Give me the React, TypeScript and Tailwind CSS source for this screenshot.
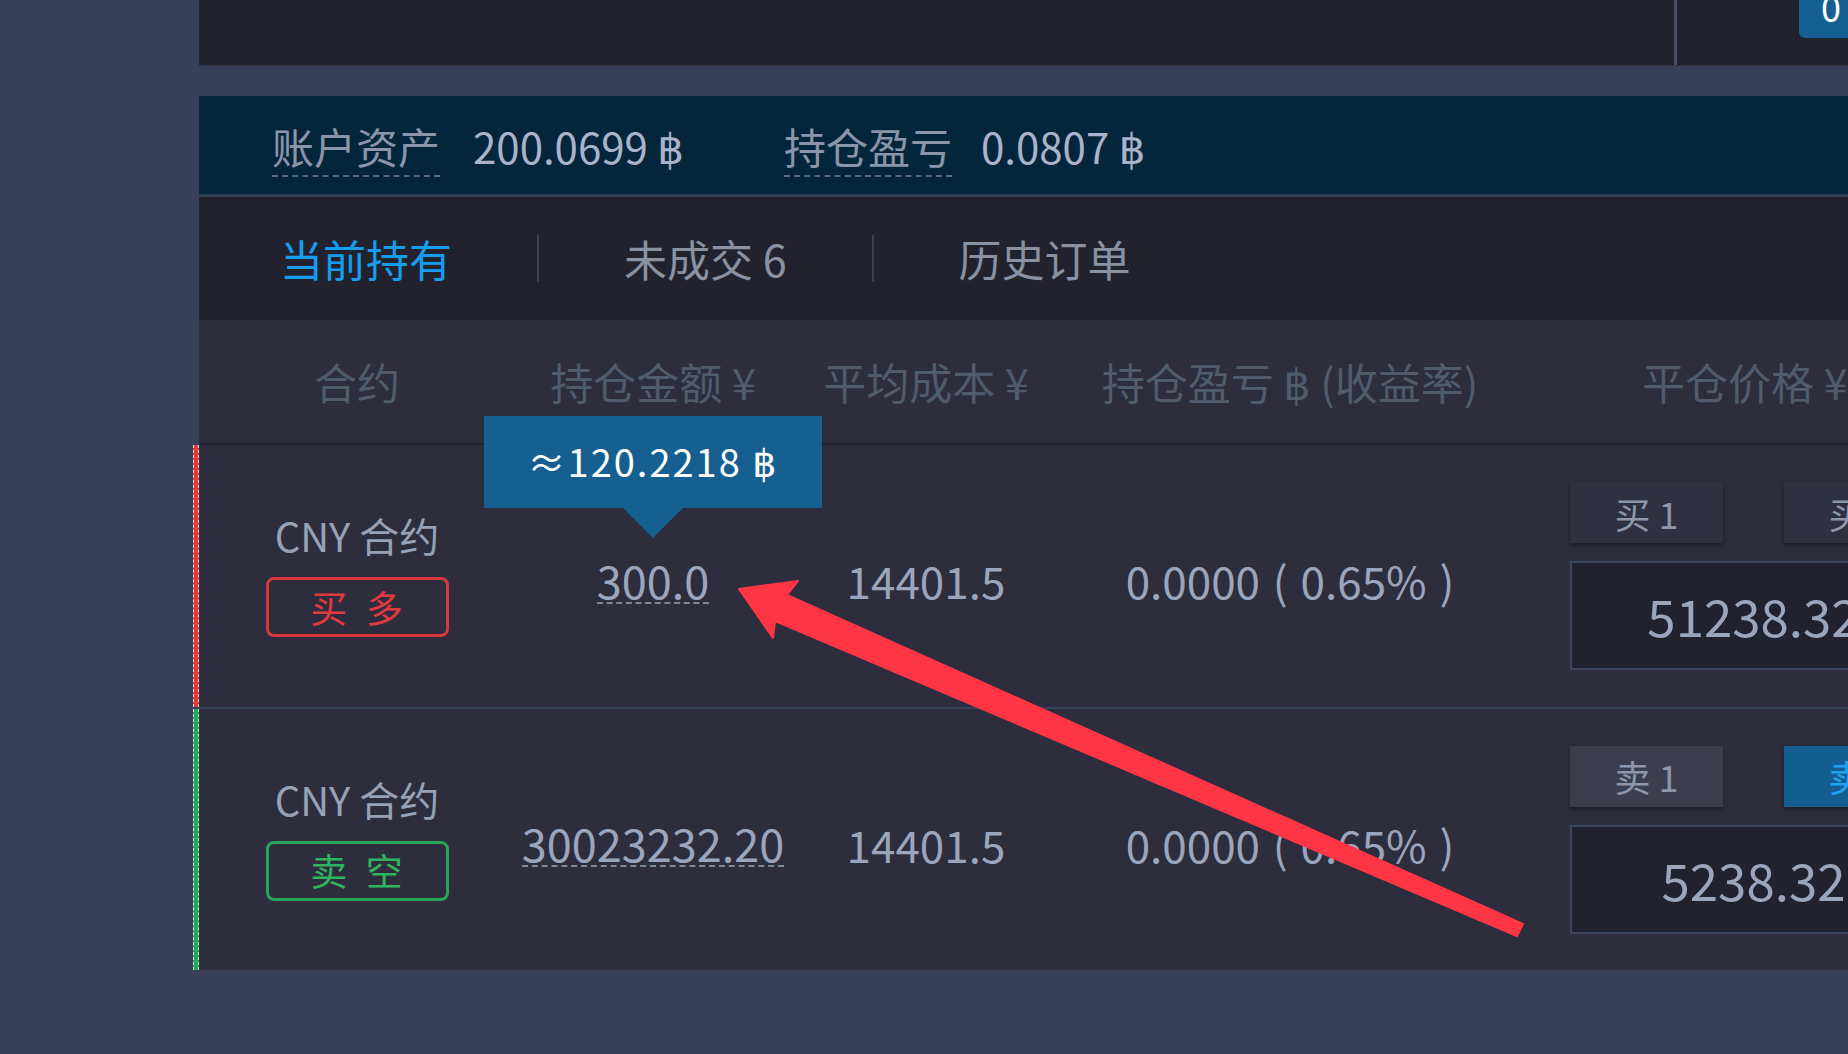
import React from 'react';

const cjk = { fontFamily: '"Noto Sans CJK SC", "Noto Sans", "DejaVu Sans", sans-serif' };

interface Position {
  side: 'long' | 'short';
  amount: string;
  cost: string;
  pnl: string;
  quick: string;
  price: string;
}

const positions: Position[] = [
  { side: 'long', amount: '300.0', cost: '14401.5', pnl: '0.0000 ( 0.65% )', quick: '买 1', price: '51238.32' },
  { side: 'short', amount: '30023232.20', cost: '14401.5', pnl: '0.0000 ( 0.65% )', quick: '卖 1', price: '5238.32' },
];

const cols = 'grid grid-cols-[316px_276px_270px_458px_418px]';

const Row: React.FC<{ p: Position; last?: boolean }> = ({ p, last }) => {
  const isLong = p.side === 'long';
  return (
    <div
      className={`relative ${cols} items-center bg-[#2d2d3d] ${last ? 'h-[261px]' : 'h-[264px] border-b-2 border-[#3a4258]'}`}
    >
      {/* side marker */}
      <div
        className={`absolute left-[-6px] top-0 bottom-0 w-[6px] border-x border-dashed border-white/80 ${isLong ? 'bg-[#e03a3e]' : 'bg-[#27a55a]'}`}
      />
      <div className="flex flex-col items-center">
        <div className="text-[40px] leading-none text-[#97a1b8]">CNY 合约</div>
        <div
          className={`mt-[22px] flex h-[60px] w-[183px] items-center justify-center rounded-[8px] border-[3px] pl-[4px] text-[37px] leading-none tracking-[5px] ${isLong ? 'border-[#d9393d] text-[#e03a3e]' : 'border-[#27a55a] text-[#2fb35f]'}`}
        >
          {isLong ? '买 多' : '卖 空'}
        </div>
      </div>
      <div className="flex justify-center pt-[8px]">
        <span className="border-b-2 border-dashed border-[#7d879c] text-[45px] leading-none text-[#9ba5bd]">{p.amount}</span>
      </div>
      <div className="flex justify-center pt-[8px]">
        <span className="text-[44px] leading-none text-[#9ba5bd]">{p.cost}</span>
      </div>
      <div className="flex justify-center pt-[8px]">
        <span className="text-[44px] leading-none text-[#9ba5bd] [word-spacing:3px]">{p.pnl}</span>
      </div>
      <div className="pl-[51px]">
        <div className="flex gap-[61px]">
          <button
            className={`flex h-[61px] w-[153px] items-center justify-center text-[36px] leading-none text-[#8d96ab] shadow-[0_2px_4px_rgba(0,0,0,0.35)] ${isLong ? 'bg-[#2f3041]' : 'bg-[#3c3d4f]'}`}
          >
            {p.quick}
          </button>
          <button
            className={`flex h-[61px] w-[153px] items-center justify-center text-[36px] leading-none shadow-[0_2px_4px_rgba(0,0,0,0.35)] ${isLong ? 'bg-[#2f3041] text-[#8d96ab]' : 'bg-[#155e92] text-[#1ea2f2]'}`}
          >
            {isLong ? '买 5' : '卖 5'}
          </button>
        </div>
        <div className="mt-[18px] flex h-[109px] w-[367px] items-center justify-center border-2 border-[#3b4660] bg-[#212130] text-[51px] leading-none text-[#9ba5bd]">
          {p.price}
        </div>
      </div>
    </div>
  );
};

const App: React.FC = () => {
  return (
    <div className="relative flex h-[1054px] w-[1848px] overflow-hidden bg-[#383f58]" style={cjk}>
      <aside className="w-[199px] shrink-0 bg-[#383f58]" />

      <main className="relative flex min-w-0 flex-1 flex-col">
        {/* top panel */}
        <div className="flex h-[66px] border-b border-[#33364a] bg-[#21212d]">
          <div className="w-[1475px] shrink-0" />
          <div className="w-[3px] shrink-0 bg-[#4b5068]" />
          <div className="w-[122px] shrink-0" />
          <div className="h-[38px] flex-1 overflow-hidden rounded-bl-[6px] bg-[#155f92] pl-[22px]">
            <div className="-mt-[12px] text-[36px] leading-none text-white">0</div>
          </div>
        </div>

        <div className="h-[30px]" />

        {/* account summary */}
        <div className="flex h-[101px] items-baseline border-b-[3px] border-[#2f3f55] bg-[#05253b] pl-[73px] pt-[29px] text-[42px] leading-none">
          <span className="border-b-2 border-dashed border-[#5c687e] pb-[8px] text-[#8a95aa]">账户资产</span>
          <span className="ml-[33px] text-[#a9b3c9]">200.0699 ฿</span>
          <span className="ml-[100px] border-b-2 border-dashed border-[#5c687e] pb-[8px] text-[#8a95aa]">持仓盈亏</span>
          <span className="ml-[29px] text-[#a9b3c9]">0.0807 ฿</span>
        </div>

        {/* tabs */}
        <div className="flex h-[123px] items-center bg-[#22222e] pl-[81px] text-[43px] leading-none">
          <span className="text-[#159ef0]">当前持有</span>
          <span className="mx-[85px] h-[47px] w-[2px] bg-[#3a3f52]" />
          <span className="text-[#8991a3]">未成交 6</span>
          <span className="mx-[85px] h-[47px] w-[2px] bg-[#3a3f52]" />
          <span className="text-[#8991a3]">历史订单</span>
        </div>

        {/* table header */}
        <div className={`${cols} h-[125px] items-center border-b-2 border-[#23232d] bg-[#2d2d3d] text-[43px] leading-none text-[#505b6e]`}>
          <div className="text-center">合约</div>
          <div className="text-center">持仓金额 ¥</div>
          <div className="text-center">平均成本 ¥</div>
          <div className="text-center">持仓盈亏 ฿ (收益率)</div>
          <div className="pl-[123px]">平仓价格 ¥</div>
        </div>

        {positions.map((p, i) => (
          <Row key={i} p={p} last={i === positions.length - 1} />
        ))}

        <div className="flex-1 bg-[#383f58]" />

        {/* tooltip over amount */}
        <div className="absolute left-[285px] top-[416px] flex flex-col items-center">
          <div className="flex h-[92px] w-[338px] items-center justify-center bg-[#155f91] pb-[3px] text-[38px] leading-none tracking-[2px] text-white">
            ≈120.2218 ฿
          </div>
          <div className="h-0 w-0 border-x-[30px] border-t-[30px] border-x-transparent border-t-[#155f91]" />
        </div>
      </main>

      {/* annotation arrow */}
      <svg className="pointer-events-none absolute left-0 top-0" width="1848" height="1054" viewBox="0 0 1848 1054">
        <polygon
          points="739,589 798,581 787,595 1523,924 1517,936 775,621 773,638"
          fill="#fe3545"
          stroke="#fe3545"
          strokeWidth="2"
          strokeLinejoin="round"
        />
      </svg>
    </div>
  );
};

export default App;
